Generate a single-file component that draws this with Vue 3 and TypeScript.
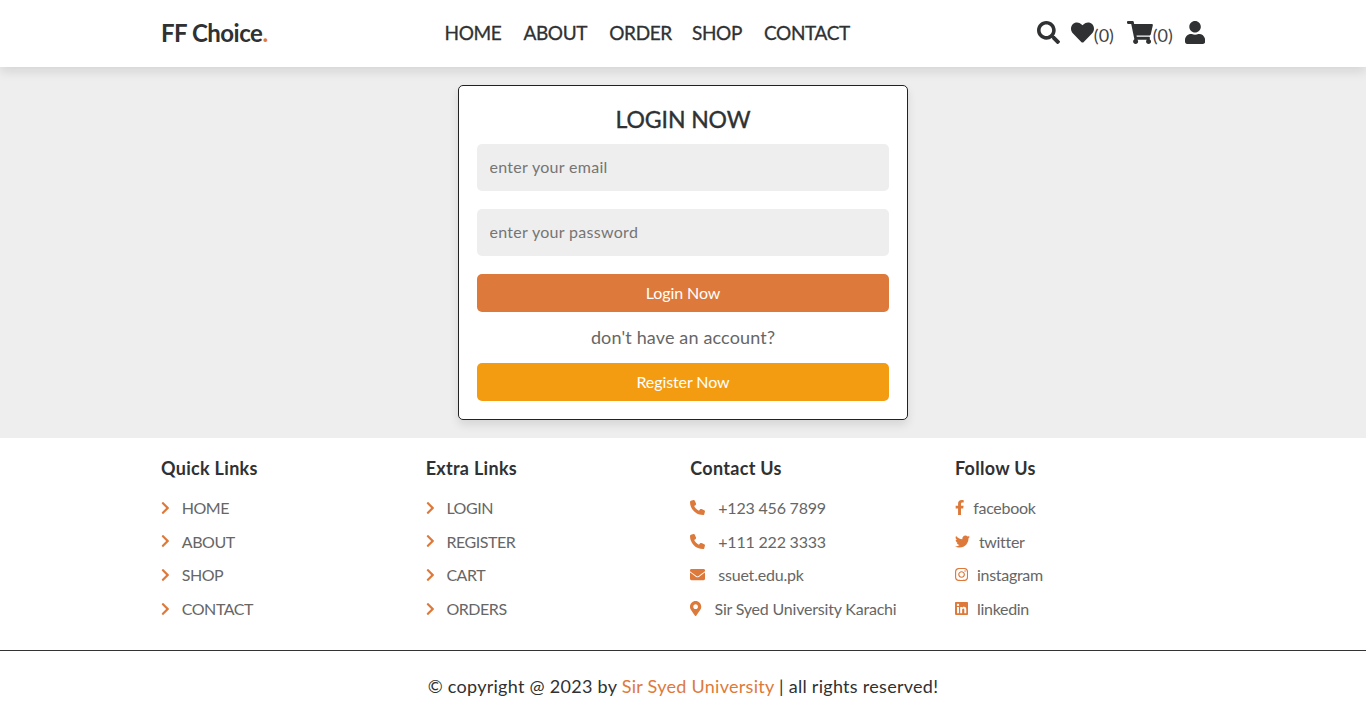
<script setup lang="ts">
interface Icon {
  w: number
  d: string
}

const icons: Record<string, Icon> = {
  search: { w: 512, d: 'M505 442.7L405.3 343c-4.5-4.5-10.6-7-17-7H372c27.6-35.3 44-79.7 44-128C416 93.1 322.9 0 208 0S0 93.1 0 208s93.1 208 208 208c48.3 0 92.7-16.4 128-44v16.3c0 6.4 2.5 12.5 7 17l99.7 99.7c9.4 9.4 24.6 9.4 33.9 0l28.3-28.3c9.4-9.4 9.4-24.6.1-34zM208 336c-70.7 0-128-57.2-128-128 0-70.7 57.2-128 128-128 70.7 0 128 57.2 128 128 0 70.7-57.2 128-128 128z' },
  heart: { w: 512, d: 'M462.3 62.6C407.5 15.9 326 24.3 275.7 76.2L256 96.5l-19.7-20.3C186.1 24.3 104.5 15.9 49.7 62.6c-62.8 53.6-66.1 149.8-9.9 207.9l193.5 199.8c12.5 12.9 32.8 12.9 45.3 0l193.5-199.8c56.3-58.1 53-154.3-9.8-207.9z' },
  cart: { w: 576, d: 'M528.12 301.319l47.273-208C578.806 78.301 567.391 64 551.99 64H159.208l-9.166-44.81C147.758 8.021 137.93 0 126.529 0H24C10.745 0 0 10.745 0 24v16c0 13.255 10.745 24 24 24h69.883l70.248 343.435C147.325 417.1 136 435.222 136 456c0 30.928 25.072 56 56 56s56-25.072 56-56c0-15.674-6.447-29.835-16.824-40h209.647C430.447 426.165 424 440.326 424 456c0 30.928 25.072 56 56 56s56-25.072 56-56c0-22.172-12.888-41.332-31.579-50.405l5.517-24.276c3.413-15.018-8.002-29.319-23.403-29.319H218.117l-6.545-32h293.145c11.206 0 20.92-7.754 23.403-18.681z' },
  user: { w: 448, d: 'M224 256c70.7 0 128-57.3 128-128S294.7 0 224 0 96 57.3 96 128s57.3 128 128 128zm89.6 32h-16.7c-22.2 10.2-46.9 16-72.9 16s-50.6-5.8-72.9-16h-16.7C60.2 288 0 348.2 0 422.4V464c0 26.5 21.5 48 48 48h352c26.5 0 48-21.5 48-48v-41.6c0-74.2-60.2-134.4-134.4-134.4z' },
  chevron: { w: 320, d: 'M285.476 272.971L91.132 467.314c-9.373 9.373-24.569 9.373-33.941 0l-22.667-22.667c-9.357-9.357-9.375-24.522-.04-33.901L188.505 256 34.484 101.255c-9.335-9.379-9.317-24.544.04-33.901l22.667-22.667c9.373-9.373 24.569-9.373 33.941 0L285.475 239.03c9.373 9.372 9.373 24.568.001 33.941z' },
  phone: { w: 512, d: 'M164.9 24.6c-7.7-18.6-28-28.5-47.4-23.2l-88 24C12.1 30.2 0 46 0 64C0 311.4 200.6 512 448 512c18 0 33.8-12.1 38.6-29.5l24-88c5.3-19.4-4.6-39.7-23.2-47.4l-96-40c-16.3-6.8-35.2-2.1-46.3 11.6L304.7 368C234.3 334.7 177.3 277.7 144 207.3L193.3 167c13.7-11.2 18.4-30 11.6-46.3l-40-96z' },
  envelope: { w: 512, d: 'M502.3 190.8c3.9-3.1 9.7-.2 9.7 4.7V400c0 26.5-21.5 48-48 48H48c-26.5 0-48-21.5-48-48V195.6c0-5 5.7-7.8 9.7-4.7 22.4 17.4 52.1 39.5 154.1 113.6 21.1 15.4 56.7 47.8 92.2 47.6 35.7.3 72-32.8 92.3-47.6 102-74.1 131.6-96.3 154-113.7zM256 320c23.2.4 56.6-29.2 73.4-41.4 132.7-96.3 142.8-104.7 173.4-128.7 5.8-4.5 9.2-11.5 9.2-18.9v-19c0-26.5-21.5-48-48-48H48C21.5 64 0 85.5 0 112v19c0 7.4 3.4 14.3 9.2 18.9 30.6 23.9 40.7 32.4 173.4 128.7 16.8 12.2 50.2 41.8 73.4 41.4z' },
  marker: { w: 384, d: 'M172.268 501.67C26.97 291.031 0 262.413 0 192 0 85.961 85.961 0 192 0s192 85.961 192 192c0 70.413-26.97 99.031-172.268 309.67-9.535 13.774-29.93 13.773-39.464 0zM192 272c44.183 0 80-35.817 80-80s-35.817-80-80-80-80 35.817-80 80 35.817 80 80 80z' },
  facebook: { w: 320, d: 'M279.14 288l14.22-92.66h-88.91v-60.13c0-25.35 12.42-50.06 52.24-50.06h40.42V6.26S260.43 0 225.36 0c-73.22 0-121.08 44.38-121.08 124.72v70.62H22.89V288h81.39v224h100.17V288z' },
  twitter: { w: 512, d: 'M459.37 151.716c.325 4.548.325 9.097.325 13.645 0 138.72-105.583 298.558-298.558 298.558-59.452 0-114.68-17.219-161.137-47.106 8.447.974 16.568 1.299 25.34 1.299 49.055 0 94.213-16.568 130.274-44.832-46.132-.975-84.792-31.188-98.112-72.772 6.498.974 12.995 1.624 19.818 1.624 9.421 0 18.843-1.3 27.614-3.573-48.081-9.747-84.143-51.98-84.143-102.985v-1.299c13.969 7.797 30.214 12.67 47.431 13.319-28.264-18.843-46.781-51.005-46.781-87.391 0-19.492 5.197-37.36 14.294-52.954 51.655 63.675 129.3 105.258 216.365 109.807-1.624-7.797-2.599-15.918-2.599-24.04 0-57.828 46.782-104.934 104.934-104.934 30.213 0 57.502 12.67 76.67 33.137 23.715-4.548 46.456-13.32 66.599-25.34-7.798 24.366-24.366 44.833-46.132 57.827 21.117-2.273 41.584-8.122 60.426-16.243-14.292 20.791-32.161 39.308-52.628 54.253z' },
  instagram: { w: 448, d: 'M224.1 141c-63.6 0-114.9 51.3-114.9 114.9s51.3 114.9 114.9 114.9S339 319.5 339 255.9 287.7 141 224.1 141zm0 189.6c-41.1 0-74.7-33.5-74.7-74.7s33.5-74.7 74.7-74.7 74.7 33.5 74.7 74.7-33.6 74.7-74.7 74.7zm146.4-194.3c0 14.9-12 26.8-26.8 26.8-14.9 0-26.8-12-26.8-26.8s12-26.8 26.8-26.8 26.8 12 26.8 26.8zm76.1 27.2c-1.7-35.9-9.9-67.7-36.2-93.9-26.2-26.2-58-34.4-93.9-36.2-37-2.1-147.9-2.1-184.9 0-35.8 1.7-67.6 9.9-93.9 36.1s-34.4 58-36.2 93.9c-2.1 37-2.1 147.9 0 184.9 1.7 35.9 9.9 67.7 36.2 93.9s58 34.4 93.9 36.2c37 2.1 147.9 2.1 184.9 0 35.9-1.7 67.7-9.9 93.9-36.2 26.2-26.2 34.4-58 36.2-93.9 2.1-37 2.1-147.8 0-184.8zM398.8 388c-7.8 19.6-22.9 34.7-42.6 42.6-29.5 11.7-99.5 9-132.1 9s-102.7 2.6-132.1-9c-19.6-7.8-34.7-22.9-42.6-42.6-11.7-29.5-9-99.5-9-132.1s-2.6-102.7 9-132.1c7.8-19.6 22.9-34.7 42.6-42.6 29.5-11.7 99.5-9 132.1-9s102.7-2.6 132.1 9c19.6 7.8 34.7 22.9 42.6 42.6 11.7 29.5 9 99.5 9 132.1s2.7 102.7-9 132.1z' },
  linkedin: { w: 448, d: 'M416 32H31.9C14.3 32 0 46.5 0 64.3v383.4C0 465.5 14.3 480 31.9 480H416c17.6 0 32-14.5 32-32.3V64.3c0-17.8-14.4-32.3-32-32.3zM135.4 416H69V202.2h66.5V416zm-33.2-243c-21.3 0-38.5-17.3-38.5-38.5S80.9 96 102.2 96c21.2 0 38.5 17.3 38.5 38.5 0 21.3-17.2 38.5-38.5 38.5zm282.1 243h-66.4V312c0-24.8-.5-56.7-34.5-56.7-34.6 0-39.9 27-39.9 54.9V416h-66.4V202.2h63.7v29.2h.9c8.9-16.8 30.6-34.5 62.9-34.5 67.2 0 79.7 44.3 79.7 101.9V416z' },
}

const nav = ['HOME', 'ABOUT', 'ORDER', 'SHOP', 'CONTACT']

const columns = [
  {
    title: 'Quick Links',
    gap: 'link',
    size: 14,
    links: [
      { icon: 'chevron', text: 'HOME' },
      { icon: 'chevron', text: 'ABOUT' },
      { icon: 'chevron', text: 'SHOP' },
      { icon: 'chevron', text: 'CONTACT' },
    ],
  },
  {
    title: 'Extra Links',
    gap: 'link',
    size: 14,
    links: [
      { icon: 'chevron', text: 'LOGIN' },
      { icon: 'chevron', text: 'REGISTER' },
      { icon: 'chevron', text: 'CART' },
      { icon: 'chevron', text: 'ORDERS' },
    ],
  },
  {
    title: 'Contact Us',
    gap: 'contact',
    size: 15,
    links: [
      { icon: 'phone', text: '+123 456 7899' },
      { icon: 'phone', text: '+111 222 3333' },
      { icon: 'envelope', text: 'ssuet.edu.pk' },
      { icon: 'marker', text: 'Sir Syed University Karachi' },
    ],
  },
  {
    title: 'Follow Us',
    gap: 'social',
    size: 15,
    links: [
      { icon: 'facebook', text: 'facebook' },
      { icon: 'twitter', text: 'twitter' },
      { icon: 'instagram', text: 'instagram' },
      { icon: 'linkedin', text: 'linkedin' },
    ],
  },
]

const iconWidth = (name: string, size: number) => (icons[name].w / 512) * size
</script>

<template>
  <div class="page">
    <header class="header">
      <div class="header__inner">
        <a class="logo">FF Choice<span>.</span></a>
        <nav class="nav">
          <a v-for="item in nav" :key="item">{{ item }}</a>
        </nav>
        <div class="tools">
          <svg :viewBox="`0 0 ${icons.search.w} 512`" :width="iconWidth('search', 23)" height="23"><path :d="icons.search.d" /></svg>
          <a class="tool-group tool-group--wish">
            <svg :viewBox="`0 0 ${icons.heart.w} 512`" :width="iconWidth('heart', 23)" height="23"><path :d="icons.heart.d" /></svg>
            <span>(0)</span>
          </a>
          <a class="tool-group tool-group--cart">
            <svg :viewBox="`0 0 ${icons.cart.w} 512`" :width="iconWidth('cart', 23)" height="23"><path :d="icons.cart.d" /></svg>
            <span>(0)</span>
          </a>
          <svg :viewBox="`0 0 ${icons.user.w} 512`" :width="iconWidth('user', 23)" height="23"><path :d="icons.user.d" /></svg>
        </div>
      </div>
    </header>

    <main class="main">
      <form class="card" @submit.prevent>
        <h3>LOGIN NOW</h3>
        <input type="email" placeholder="enter your email" />
        <input type="password" placeholder="enter your password" />
        <button type="submit" class="btn btn--login">Login Now</button>
        <p>don't have an account?</p>
        <a class="btn btn--register">Register Now</a>
      </form>
    </main>

    <footer class="footer">
      <section class="footer__grid">
        <div v-for="col in columns" :key="col.title" class="footer__col">
          <h3>{{ col.title }}</h3>
          <a v-for="link in col.links" :key="link.text" class="footer__link" :class="`footer__link--${col.gap}`">
            <svg :viewBox="`0 0 ${icons[link.icon].w} 512`" :width="iconWidth(link.icon, col.size)" :height="col.size"><path :d="icons[link.icon].d" /></svg>
            <span>{{ link.text }}</span>
          </a>
        </div>
      </section>
      <p class="credit">&copy; copyright @ 2023 by <span>Sir Syed University</span> | all rights reserved!</p>
    </footer>
  </div>
</template>

<style>
body {
  margin: 0;
  background: #fff;
}
</style>

<style scoped>
.page {
  font-family: Lato, 'Noto Sans', sans-serif;
  color: #2f3133;
}

.header {
  position: relative;
  z-index: 2;
  height: 67px;
  background: #fff;
  box-shadow: 0 5px 10px rgba(0, 0, 0, 0.1);
}

.header__inner {
  width: 1044px;
  height: 100%;
  box-sizing: border-box;
  margin: 0 auto;
  padding-bottom: 2px;
  display: flex;
  align-items: center;
  justify-content: space-between;
}

.logo {
  font-size: 24px;
  font-weight: 700;
  letter-spacing: -0.5px;
}

.logo span {
  color: #dd7a3b;
}

.nav {
  display: flex;
  gap: 22px;
  margin-right: 10px;
  font-size: 19px;
  letter-spacing: -0.35px;
  -webkit-text-stroke: 0.3px #2f3133;
}

.nav a:nth-child(4) {
  margin-left: -2px;
}

.tools {
  display: flex;
  align-items: center;
  gap: 12px;
  font-size: 18px;
  padding-bottom: 1px;
}

.tools svg {
  fill: #2f3133;
  display: block;
}

.tool-group {
  display: flex;
  align-items: flex-end;
}

.tool-group--wish {
  margin-left: -1px;
}

.tool-group--cart {
  margin-left: 1px;
}

.tool-group span {
  line-height: 20px;
  margin-bottom: -1px;
  color: #444;
}

.main {
  padding: 18px 0;
  background: #eee;
}

.card {
  width: 450px;
  box-sizing: border-box;
  margin: 0 auto;
  padding: 18px;
  background: #fff;
  border: 1px solid #222;
  border-radius: 5px;
  box-shadow: 0 5px 10px rgba(0, 0, 0, 0.1);
  text-align: center;
}

.card h3 {
  margin: 0 0 10px;
  font-size: 23px;
  line-height: 30px;
  font-weight: 400;
  letter-spacing: -0.1px;
  -webkit-text-stroke: 0.4px #2f3133;
}

.card input {
  display: block;
  width: 100%;
  height: 47px;
  box-sizing: border-box;
  margin: 0 0 18px;
  padding: 0 12px 2px 12.5px;
  border: none;
  border-radius: 5px;
  background: #eee;
  font: inherit;
  font-size: 16px;
  letter-spacing: 0.3px;
}

.card p {
  margin: 0 0 13px;
  font-size: 18px;
  line-height: 25px;
  letter-spacing: 0.15px;
  color: #666;
}

.btn {
  display: flex;
  align-items: center;
  justify-content: center;
  width: 100%;
  height: 38px;
  box-sizing: border-box;
  padding: 0 0 2px;
  border: none;
  border-radius: 5px;
  font: inherit;
  font-size: 16px;
  letter-spacing: -0.1px;
  color: #fff;
  cursor: pointer;
}

.btn--login {
  margin-bottom: 13px;
  background: #dd7a3b;
}

.btn--register {
  background: #f39c12;
}

.footer {
  background: #fff;
}

.footer__grid {
  width: 1044px;
  margin: 0 auto;
  padding: 18px 0 25px;
  display: grid;
  grid-template-columns: repeat(4, 1fr);
  gap: 14.5px;
}

.footer__col h3 {
  margin: 0 0 10px;
  font-size: 18px;
  line-height: 25px;
  font-weight: 700;
  letter-spacing: 0.3px;
}

.footer__link {
  display: flex;
  align-items: center;
  height: 33.6px;
  font-size: 16px;
  letter-spacing: -0.2px;
  color: #666;
}

.footer__link svg {
  flex: none;
  fill: #dd7a3b;
}

.footer__link--link {
  letter-spacing: -0.45px;
}

.footer__link--link span {
  margin-left: 12px;
}

.footer__link--contact span {
  margin-left: 13px;
}

.footer__link--social {
  letter-spacing: -0.3px;
}

.footer__link--social span {
  margin-left: 9px;
}

.credit {
  margin: 0;
  padding: 23px 0 21px;
  border-top: 1px solid #333;
  font-size: 18px;
  line-height: 25px;
  letter-spacing: 0.28px;
  text-align: center;
}

.credit span {
  color: #dd7a3b;
}
</style>
